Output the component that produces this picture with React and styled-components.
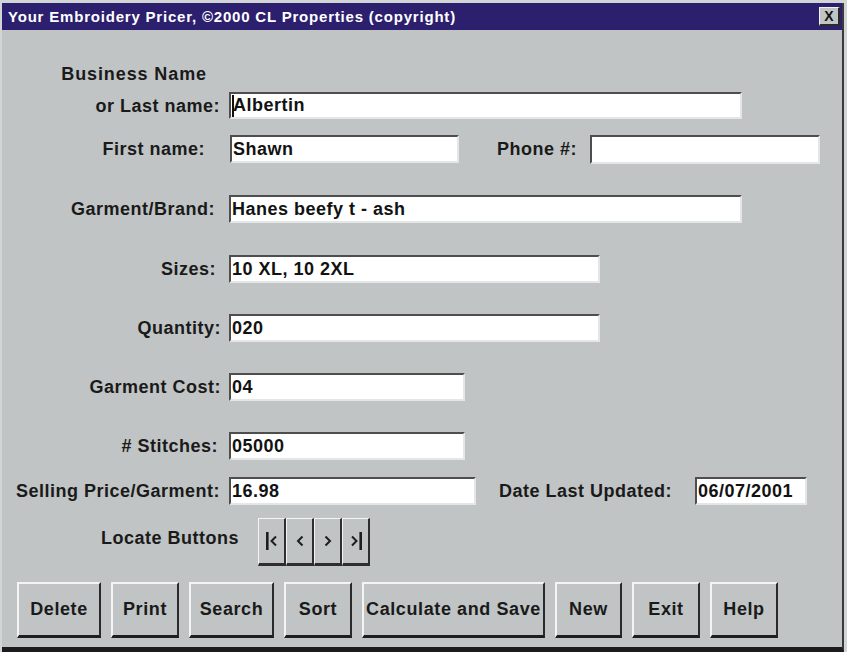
import React from "react";
import styled, { createGlobalStyle } from "styled-components";

const GlobalStyle = createGlobalStyle`
  html, body { margin: 0; padding: 0; background: #c0c4c4; }
  body { font-family: "Liberation Sans", Arial, sans-serif; }
  * { box-sizing: border-box; }
`;

const Frame = styled.div`
  width: 847px;
  height: 652px;
  background: #d2d5d5;
  padding: 3px 3px 0 2px;
  display: flex;
  flex-direction: column;
`;

const Window = styled.div`
  flex: 1;
  background: #c0c4c4;
  border-right: 2px solid #3a3a3a;
  border-bottom: 5px solid #1c1c1c;
  display: flex;
  flex-direction: column;
`;

const TitleBar = styled.div`
  height: 27px;
  background: #2c1f6e;
  display: flex;
  align-items: center;
  justify-content: space-between;
  padding: 0 2px 0 6px;
`;

const Title = styled.span`
  color: #ffffff;
  font-weight: bold;
  font-size: 15px;
  letter-spacing: 0.8px;
`;

const CloseBtn = styled.div`
  width: 21px;
  height: 19px;
  background: #c0c4c4;
  border-top: 1px solid #f2f2f2;
  border-left: 1px solid #f2f2f2;
  border-right: 2px solid #2a2a2a;
  border-bottom: 2px solid #2a2a2a;
  display: flex;
  align-items: center;
  justify-content: center;
  font-weight: bold;
  font-size: 14px;
  color: #111;
  line-height: 1;
`;

const Row = styled.div`
  display: flex;
  align-items: ${(p) => p.$align || "center"};
  margin-top: ${(p) => p.$mt}px;
  height: ${(p) => p.$h}px;
  padding-left: ${(p) => p.$pl || 0}px;
  gap: ${(p) => p.$gap || 0}px;
`;

const Label = styled.div`
  width: ${(p) => p.$w}px;
  flex: none;
  text-align: right;
  font-weight: bold;
  font-size: 18px;
  line-height: 20px;
  letter-spacing: ${(p) => p.$ls ?? 0.5}px;
  color: #1a1a1a;
  white-space: nowrap;
  margin-top: ${(p) => p.$mt || 0}px;
`;

const Field = styled.div`
  flex: none;
  width: ${(p) => p.$w}px;
  height: ${(p) => p.$h || 28}px;
  margin-left: ${(p) => p.$x}px;
  background: #ffffff;
  border-top: 2px solid #4e4e4e;
  border-left: 2px solid #4e4e4e;
  border-right: 2px solid #e4e7e7;
  border-bottom: 2px solid #e4e7e7;
  display: flex;
  align-items: center;
  padding-left: 1px;
  font-weight: bold;
  font-size: 18px;
  letter-spacing: 0.5px;
  color: #121212;
  white-space: nowrap;
  overflow: hidden;
`;

const Caret = styled.span`
  display: inline-block;
  width: 2px;
  height: 22px;
  background: #111;
  margin-right: -1px;
`;

const NavGroup = styled.div`
  display: flex;
  margin-left: ${(p) => p.$x}px;
`;

const NavBtn = styled.div`
  width: 28px;
  height: 48px;
  background: #c0c4c4;
  border-top: 1px solid #f4f4f4;
  border-left: 1px solid #f4f4f4;
  border-right: 2px solid #2e2e2e;
  border-bottom: 3px solid #2e2e2e;
  display: flex;
  align-items: center;
  justify-content: center;
  color: #1e1e1e;
`;

const Btn = styled.div`
  flex: none;
  width: ${(p) => p.$w}px;
  height: 56px;
  background: #c0c4c4;
  border-top: 2px solid #f4f4f4;
  border-left: 2px solid #f4f4f4;
  border-right: 2px solid #2a2a2a;
  border-bottom: 3px solid #1e1e1e;
  display: flex;
  align-items: center;
  justify-content: center;
  font-weight: bold;
  font-size: 18px;
  letter-spacing: 0.6px;
  color: #1a1a1a;
  white-space: nowrap;
`;

const FirstIcon = () => (
  <svg width="14" height="20" viewBox="0 0 14 20">
    <rect x="1" y="1" width="2.6" height="18" fill="currentColor" />
    <polyline points="11,5.5 6.5,10 11,14.5" fill="none" stroke="currentColor" strokeWidth="2" />
  </svg>
);
const PrevIcon = () => (
  <svg width="10" height="20" viewBox="0 0 10 20">
    <polyline points="7.5,5.5 3,10 7.5,14.5" fill="none" stroke="currentColor" strokeWidth="2" />
  </svg>
);
const NextIcon = () => (
  <svg width="10" height="20" viewBox="0 0 10 20">
    <polyline points="2.5,5.5 7,10 2.5,14.5" fill="none" stroke="currentColor" strokeWidth="2" />
  </svg>
);
const LastIcon = () => (
  <svg width="14" height="20" viewBox="0 0 14 20">
    <polyline points="3,5.5 7.5,10 3,14.5" fill="none" stroke="currentColor" strokeWidth="2" />
    <rect x="10.4" y="1" width="2.6" height="18" fill="currentColor" />
  </svg>
);

const buttons = [
  ["Delete", 84],
  ["Print", 68],
  ["Search", 85],
  ["Sort", 68],
  ["Calculate and Save", 183],
  ["New", 67],
  ["Exit", 68],
  ["Help", 68],
];

export default function App() {
  return (
    <>
      <GlobalStyle />
      <Frame>
        <Window>
          <TitleBar>
            <Title>Your Embroidery Pricer, ©2000 CL Properties (copyright)</Title>
            <CloseBtn>X</CloseBtn>
          </TitleBar>

          <Row $mt={34} $h={20}>
            <Label $w={205} $ls={0.9}>Business Name</Label>
          </Row>

          <Row $mt={8} $h={27}>
            <Label $w={218}>or Last name:</Label>
            <Field $x={9} $w={513} $h={27}>
              <Caret />
              Albertin
            </Field>
          </Row>

          <Row $mt={16} $h={28}>
            <Label $w={203}>First name:</Label>
            <Field $x={25} $w={229}>Shawn</Field>
            <Label $w={118}>Phone #:</Label>
            <Field $x={13} $w={230} $h={29}></Field>
          </Row>

          <Row $mt={32} $h={28}>
            <Label $w={213}>Garment/Brand:</Label>
            <Field $x={14} $w={513}>Hanes beefy t - ash</Field>
          </Row>

          <Row $mt={32} $h={28}>
            <Label $w={214}>Sizes:</Label>
            <Field $x={13} $w={371}>10 XL, 10 2XL</Field>
          </Row>

          <Row $mt={31} $h={28}>
            <Label $w={219}>Quantity:</Label>
            <Field $x={8} $w={371}>020</Field>
          </Row>

          <Row $mt={31} $h={28}>
            <Label $w={219}>Garment Cost:</Label>
            <Field $x={8} $w={236}>04</Field>
          </Row>

          <Row $mt={31} $h={28}>
            <Label $w={216}># Stitches:</Label>
            <Field $x={11} $w={236}>05000</Field>
          </Row>

          <Row $mt={17} $h={28}>
            <Label $w={218}>Selling Price/Garment:</Label>
            <Field $x={9} $w={247}>16.98</Field>
            <Label $w={196}>Date Last Updated:</Label>
            <Field $x={23} $w={112}>06/07/2001</Field>
          </Row>

          <Row $mt={13} $h={48} $align="flex-start">
            <Label $w={237} $mt={10}>
              Locate Buttons
            </Label>
            <NavGroup $x={19}>
              <NavBtn><FirstIcon /></NavBtn>
              <NavBtn><PrevIcon /></NavBtn>
              <NavBtn><NextIcon /></NavBtn>
              <NavBtn><LastIcon /></NavBtn>
            </NavGroup>
          </Row>

          <Row $mt={16} $h={56} $pl={15} $gap={10}>
            {buttons.map(([t, w]) => (
              <Btn key={t} $w={w}>
                {t}
              </Btn>
            ))}
          </Row>
        </Window>
      </Frame>
    </>
  );
}
